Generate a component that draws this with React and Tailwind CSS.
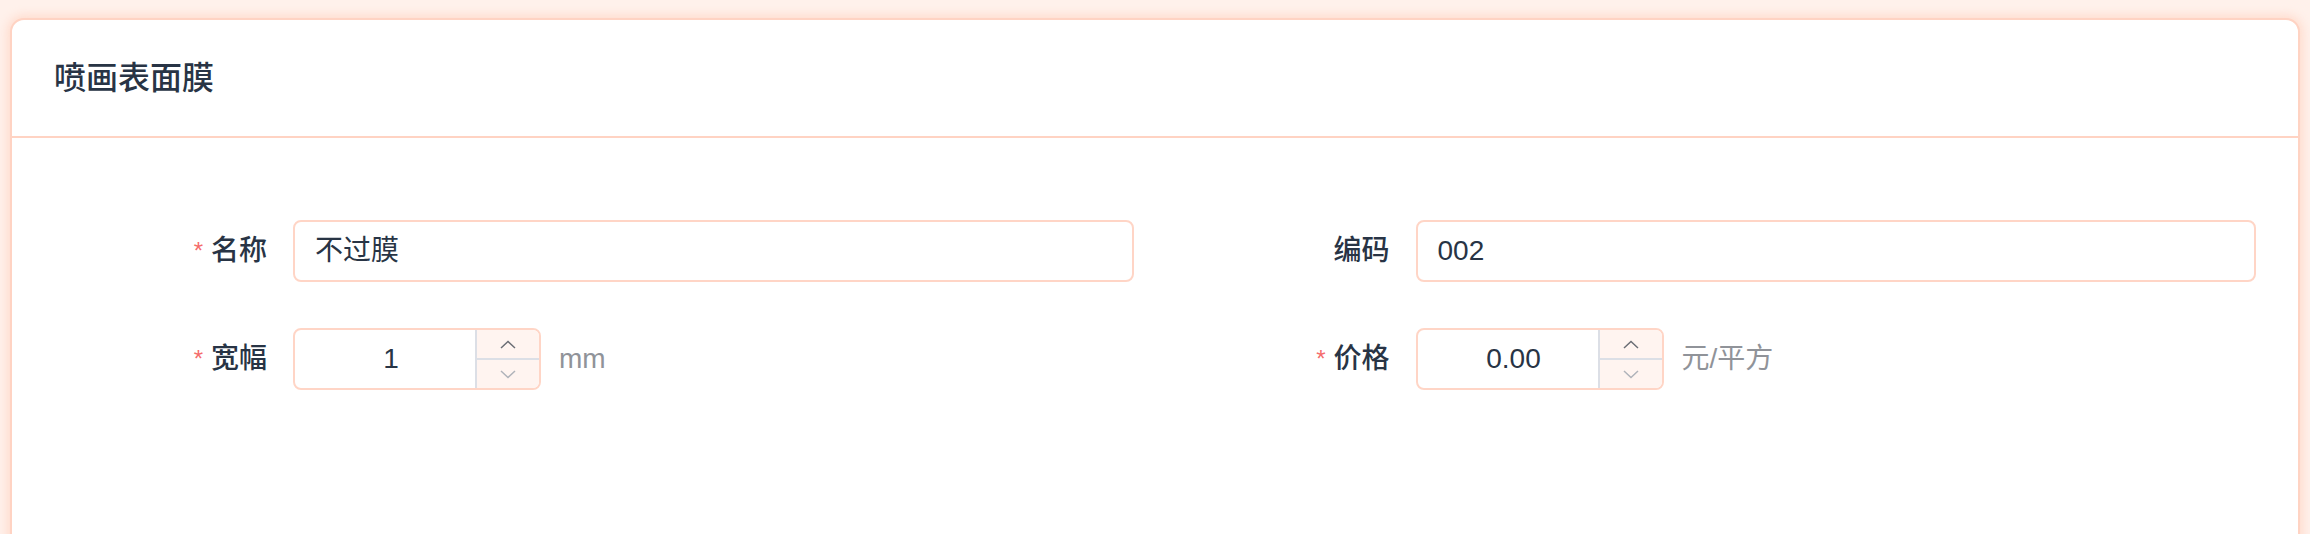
import React from "react";

const font = { fontFamily: '"Liberation Sans", "Noto Sans CJK SC", sans-serif' };

function Up() {
  return (
    <svg width="16" height="9" viewBox="0 0 16 9" fill="none">
      <polyline points="1,8 8,1.5 15,8" stroke="#6b6e75" strokeWidth="1.5" />
    </svg>
  );
}
function Down() {
  return (
    <svg width="16" height="9" viewBox="0 0 16 9" fill="none">
      <polyline points="1,1 8,7.5 15,1" stroke="#b0b3ba" strokeWidth="1.5" />
    </svg>
  );
}

function Label({ required, children }) {
  return (
    <div className="w-[239px] shrink-0 flex items-center justify-end pr-[26px] text-[28px] text-[#283445] font-medium">
      {required && <span className="text-[#f56c6c] text-[24px] mr-[8px] leading-none">*</span>}
      <span>{children}</span>
    </div>
  );
}

function TextInput({ value }) {
  return (
    <div className="flex-1 h-[62px] border-2 border-[#ffd5c6] rounded-[8px] flex items-center pl-[20px] text-[28px] text-[#283445]">
      {value}
    </div>
  );
}

function NumInput({ value, unit }) {
  return (
    <div className="flex items-center">
      <div className="w-[248px] h-[62px] border-2 border-[#ffd5c6] rounded-[8px] flex overflow-hidden">
        <div className="flex-1 flex items-center justify-center pl-[12px] text-[28px] text-[#283445]">{value}</div>
        <div className="w-[64px] border-l-2 border-[#dcdfe6] bg-[#fff4f0] flex flex-col">
          <div className="flex-1 flex items-center justify-center border-b-2 border-[#dcdfe6]">
            <Up />
          </div>
          <div className="flex-1 flex items-center justify-center">
            <Down />
          </div>
        </div>
      </div>
      <span className="ml-[18px] text-[28px] text-[#909399]">{unit}</span>
    </div>
  );
}

export default function App() {
  return (
    <div style={font} className="min-h-[534px] bg-[#fff1eb] pt-[18px] px-[10px]">
      <div className="bg-white border-2 border-[#ffd3c3] rounded-[14px] shadow-[0_0_10px_3px_rgba(255,195,170,0.45)] min-h-[640px]">
        <div className="h-[118px] border-b-2 border-[#ffd3c3] flex items-center px-[42px]">
          <h1 className="text-[32px] font-medium text-[#283445]">喷画表面膜</h1>
        </div>
        <div className="px-[42px] pt-[82px] grid grid-cols-2 gap-x-[43px] gap-y-[46px]">
          <div className="flex items-center">
            <Label required>名称</Label>
            <TextInput value="不过膜" />
          </div>
          <div className="flex items-center">
            <Label>编码</Label>
            <TextInput value="002" />
          </div>
          <div className="flex items-center">
            <Label required>宽幅</Label>
            <NumInput value="1" unit="mm" />
          </div>
          <div className="flex items-center">
            <Label required>价格</Label>
            <NumInput value="0.00" unit="元/平方" />
          </div>
        </div>
      </div>
    </div>
  );
}
